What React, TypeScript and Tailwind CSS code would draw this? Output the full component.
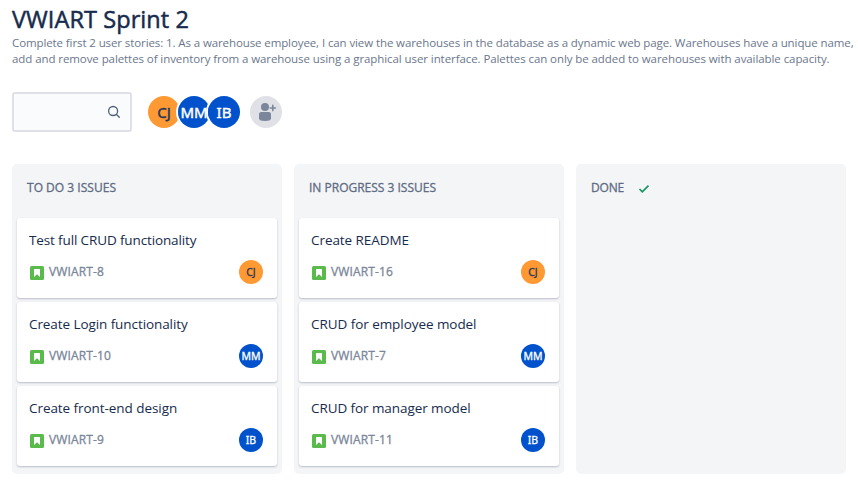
type Person = 'CJ' | 'MM' | 'IB';
type Issue = { title: string; id: string; who: Person; titleCls: string };

const todo: Issue[] = [
  { title: 'Test full CRUD functionality', id: 'VWIART-8', who: 'CJ', titleCls: 'tracking-[-0.13px]' },
  { title: 'Create Login functionality', id: 'VWIART-10', who: 'MM', titleCls: 'tracking-[-0.08px]' },
  { title: 'Create front-end design', id: 'VWIART-9', who: 'IB', titleCls: 'tracking-[-0.06px]' },
];

const progress: Issue[] = [
  { title: 'Create README', id: 'VWIART-16', who: 'CJ', titleCls: 'tracking-[-0.06px]' },
  { title: 'CRUD for employee model', id: 'VWIART-7', who: 'MM', titleCls: 'tracking-[-0.06px]' },
  { title: 'CRUD for manager model', id: 'VWIART-11', who: 'IB', titleCls: 'tracking-[-0.08px]' },
];

const tone: Record<Person, string> = {
  CJ: 'bg-[#ff9933] text-[#253858]',
  MM: 'bg-[#0052cc] text-white',
  IB: 'bg-[#0052cc] text-white',
};

function Avatar({ who, large = false }: { who: Person; large?: boolean }) {
  const size = large
    ? 'size-8 text-[15px] [-webkit-text-stroke:0.45px]'
    : 'size-6 text-[10.5px] [-webkit-text-stroke:0.3px]';
  return (
    <span className={`flex shrink-0 items-center justify-center overflow-hidden rounded-full font-['Noto_Sans',sans-serif] leading-none ${size} ${tone[who]}`}>
      {who}
    </span>
  );
}

function StoryIcon() {
  return (
    <svg className="mt-[2px] size-4 shrink-0" viewBox="0 0 16 16">
      <rect x="1" y="1" width="14" height="14" rx="1.5" fill="#5aba4b" />
      <path d="M5 4.7a.7.7 0 0 1 .7-.7h4.6a.7.7 0 0 1 .7.7V12L8 9.2 5 12z" fill="#fff" />
    </svg>
  );
}

function Card({ issue }: { issue: Issue }) {
  return (
    <article className="h-20 rounded-[3px] bg-white px-3 pt-3 shadow-[0_1px_2px_rgba(9,30,66,0.25)]">
      <h3 className={`h-5 whitespace-nowrap text-[13.5px] leading-5 text-[#172b4d] ${issue.titleCls}`}>{issue.title}</h3>
      <div className="mt-[10px] flex h-6 items-center">
        <StoryIcon />
        <span className="ml-1 flex-1 whitespace-nowrap text-[12px] tracking-[0.13px] text-[#7a869a] [-webkit-text-stroke:0.3px]">{issue.id}</span>
        <span className="mr-[2px] flex"><Avatar who={issue.who} /></span>
      </div>
    </article>
  );
}

function Column({ title, titleCls, issues, done = false }: { title: string; titleCls: string; issues: Issue[]; done?: boolean }) {
  return (
    <section className="h-[310px] w-[270px] shrink-0 rounded-[5px] bg-[#f4f5f7] px-[5px]">
      <header className="flex h-[54px] items-start pl-[10px] pt-[15px]">
        <h2 className={`whitespace-nowrap text-[12px] leading-[18px] text-[#5e6c84] [-webkit-text-stroke:0.3px] ${titleCls}`}>{title}</h2>
        {done && (
          <svg className="ml-3 mt-[2px] size-4" viewBox="0 0 16 16" fill="none" stroke="#14945f" strokeWidth="1.6">
            <path d="M3.5 8 6.3 10.8 12.5 4.6" />
          </svg>
        )}
      </header>
      <div className="flex flex-col gap-1">
        {issues.map((issue) => <Card key={issue.id} issue={issue} />)}
      </div>
    </section>
  );
}

export default function App() {
  return (
    <main className="h-[489px] w-[858px] overflow-hidden bg-white px-3 pt-1 font-['Open_Sans','Noto_Sans',sans-serif]">
      <h1 className="h-[30px] whitespace-nowrap text-[23.5px] leading-[31px] tracking-[0.08px] text-[#172b4d] [-webkit-text-stroke:0.5px]">VWIART Sprint 2</h1>
      <p className="mt-[1px] h-8 whitespace-nowrap text-[11.5px] leading-4 text-[#6b778c]">
        <span className="block tracking-[-0.1px]">Complete first 2 user stories: 1. As a warehouse employee, I can view the warehouses in the database as a dynamic web page. Warehouses have a unique name,</span>
        <span className="block tracking-[-0.08px]">add and remove palettes of inventory from a warehouse using a graphical user interface. Palettes can only be added to warehouses with available capacity.</span>
      </p>
      <div className="mt-[25px] flex h-10 items-center">
        <div className="flex h-10 w-[120px] items-center justify-end rounded-[3px] border-2 border-[#dfe1e6] bg-[#fafbfc] pr-2">
          <svg className="size-4" viewBox="0 0 16 16" fill="none" stroke="#505f79" strokeWidth="1.3" strokeLinecap="round">
            <circle cx="7.1" cy="7" r="4.5" />
            <path d="m10.5 10.5 2.8 2.8" />
          </svg>
        </div>
        <div className="ml-[14px] flex">
          <span className="rounded-full border-2 border-white"><Avatar who="CJ" large /></span>
          <span className="-ml-[6px] rounded-full border-2 border-white"><Avatar who="MM" large /></span>
          <span className="-ml-[6px] rounded-full border-2 border-white"><Avatar who="IB" large /></span>
        </div>
        <div className="ml-2 flex size-8 items-center justify-center rounded-full bg-[#dfe1e6]">
          <svg className="size-8" viewBox="0 0 32 32" fill="#7a869a">
            <circle cx="15" cy="11" r="4" />
            <path d="M9 18.3a2.3 2.3 0 0 1 2.3-2.3h7.4a2.3 2.3 0 0 1 2.3 2.3V22.5c0 1.7-2.5 2.5-6 2.5s-6-.8-6-2.5z" />
            <path d="M22 9.4a.8.8 0 0 1 1.6 0v1.8h1.8a.8.8 0 0 1 0 1.6h-1.8v1.8a.8.8 0 0 1-1.6 0v-1.8h-1.8a.8.8 0 0 1 0-1.6H22z" />
          </svg>
        </div>
      </div>
      <div className="mt-8 flex gap-3">
        <Column title="TO DO 3 ISSUES" titleCls="tracking-[0.02px]" issues={todo} />
        <Column title="IN PROGRESS 3 ISSUES" titleCls="tracking-[0px]" issues={progress} />
        <Column title="DONE" titleCls="tracking-[-0.2px]" issues={[]} done />
      </div>
    </main>
  );
}
